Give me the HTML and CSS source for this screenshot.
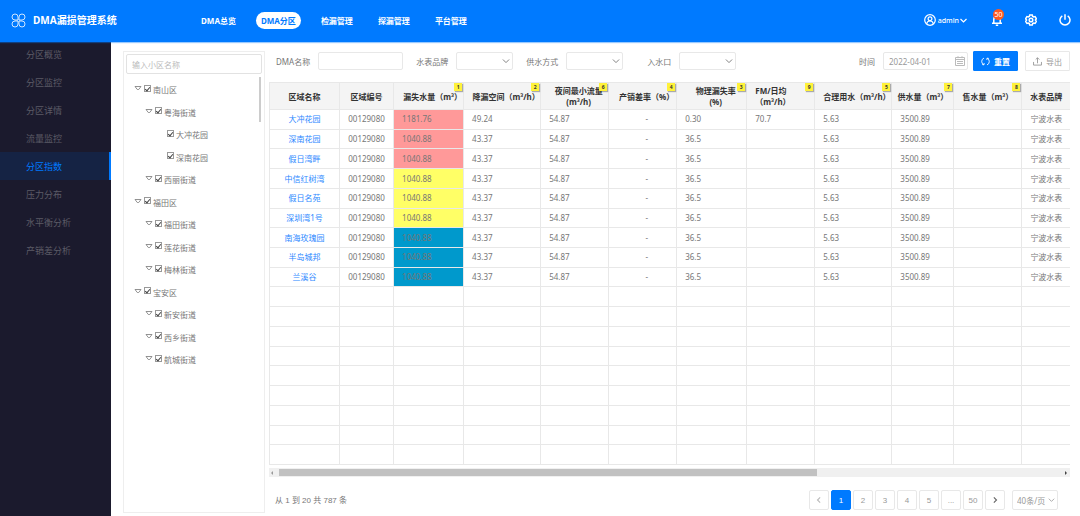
FILE: index.html
```html
<!DOCTYPE html>
<html lang="zh-CN">
<head>
  <meta charset="UTF-8" />
  <meta name="viewport" content="width=device-width, initial-scale=1.0"/>
  <title>DMA漏损管理系统</title>
  <link rel="stylesheet" href="styles.css">
</head>
<body>
  <header class="topbar">
    <svg class="logo" viewBox="0 0 15 15">
      <path d="M7 7H4A3 3 0 1 1 7 4zM8 7V4a3 3 0 1 1 3 3zM7 8v3a3 3 0 1 1-3-3zM8 8h3a3 3 0 1 1-3 3z"/>
    </svg>
    <h1>DMA漏损管理系统</h1>
    <nav class="main-nav">
      <a href="#">DMA总览</a>
      <a href="#" class="active">DMA分区</a>
      <a href="#">检漏管理</a>
      <a href="#">探漏管理</a>
      <a href="#">平台管理</a>
    </nav>
    <div class="tools">
      <button class="user" type="button">
        <svg class="icon" viewBox="0 0 12 12"><circle cx="6" cy="6" r="5.300"/><circle cx="6" cy="4.700" r="1.900"/><path d="M2.600 9.900c.4-2 1.700-2.900 3.400-2.900s3 .9 3.400 2.900"/></svg>
        <span>admin</span>
        <svg class="caret" viewBox="0 0 7 7"><path d="M.5 2l3 3 3-3"/></svg>
      </button>
      <button class="bell" type="button" aria-label="消息">
        <svg class="icon" viewBox="0 0 12 12"><path d="M1 9.300h10M2.800 9V5.500a3.200 3.200 0 0 1 6.400 0V9M4.800 11.300h2.400"/></svg>
        <span class="count">50</span>
      </button>
      <button class="gear" type="button" aria-label="设置">
        <svg class="icon" viewBox="0 0 12 12"><path d="M4.700 1h2.600l.4 1.400 1 .6 1.400-.4 1.300 2.200L10.400 6l1 1.200-1.300 2.200L8.700 9l-1 .6-.4 1.400H4.700l-.4-1.400-1-.6-1.400.4L.6 7.200l1-1.200-1-1.200 1.300-2.200 1.400.4 1-.6z"/><circle cx="6" cy="6" r="1.800"/></svg>
      </button>
      <button class="power" type="button" aria-label="退出">
        <svg class="icon" viewBox="0 0 12 12"><path d="M6 .3v5.500M3.300 1.800a5 5 0 1 0 5.400 0"/></svg>
      </button>
    </div>
  </header>

  <div class="layout">
    <nav class="sidebar">
      <a href="#">分区概览</a>
      <a href="#">分区监控</a>
      <a href="#">分区详情</a>
      <a href="#">流量监控</a>
      <a href="#" class="active">分区指数</a>
      <a href="#">压力分布</a>
      <a href="#">水平衡分析</a>
      <a href="#">产销差分析</a>
    </nav>

    <main class="content">
      <section class="tree-panel">
        <input type="text" class="search" placeholder="输入小区名称" aria-label="小区名称">
        <ul class="tree" id="tree"></ul>
        <span class="tree-scroll"></span>
      </section>

      <section class="data-panel">
        <form class="filters" onsubmit="event.preventDefault();">
          <label for="dmaName">DMA名称</label>
          <input type="text" id="dmaName">
          <label for="brand">水表品牌</label>
          <span class="select"><select id="brand"><option></option></select><svg viewBox="0 0 7 7"><path d="M.8 2.200l2.700 2.700 2.700-2.700"/></svg></span>
          <label for="supply">供水方式</label>
          <span class="select"><select id="supply"><option></option></select><svg viewBox="0 0 7 7"><path d="M.8 2.200l2.700 2.700 2.700-2.700"/></svg></span>
          <label for="inlet" class="inlet">入水口</label>
          <span class="select"><select id="inlet"><option></option></select><svg viewBox="0 0 7 7"><path d="M.8 2.200l2.700 2.700 2.700-2.700"/></svg></span>
          <label for="date" class="date-label">时间</label>
          <span class="date"><input type="text" id="date" value="2022-04-01"><svg viewBox="0 0 10 10"><path d="M.5 1.500h9v8h-9zM.5 3.500h9M3 .2v2M7 .2v2M2 5.500h6M2 7.500h6"/></svg></span>
          <button type="reset" class="btn primary"><svg viewBox="0 0 10 10"><path d="M3.300 1.200A4 4 0 0 0 3 8.500M1.300 8.400l2 .3.200-2M6.700 8.800A4 4 0 0 0 7 1.500M8.700 1.600l-2-.3-.2 2"/></svg>重置</button>
          <button type="button" class="btn"><svg viewBox="0 0 10 10"><path d="M5 7V1M3 2.800L5 .8l2 2M.6 5.500v3.500h8.800V5.500"/></svg>导出</button>
        </form>

        <table>
          <thead>
            <tr>
              <th class="plain">区域名称</th>
              <th class="plain">区域编号</th>
              <th>漏失水量（m³）<i class="tag">1</i></th>
              <th>降漏空间（m³/h）<i class="tag">2</i></th>
              <th>夜间最小流量<br>(m³/h)<i class="tag">6</i></th>
              <th>产销差率（%）<i class="tag">4</i></th>
              <th>物理漏失率<br>(%)<i class="tag">3</i></th>
              <th class="left">FM/日均<br>（m³/h）<i class="tag">9</i></th>
              <th class="left">合理用水（m³/h）<i class="tag">5</i></th>
              <th class="plain">供水量（m³）<i class="tag">7</i></th>
              <th class="plain">售水量（m³）<i class="tag">8</i></th>
              <th class="plain">水表品牌</th>
            </tr>
          </thead>
          <tbody id="rows"></tbody>
        </table>

        <div class="hscroll">
          <span class="arrow prev"></span>
          <span class="track"><span class="thumb"></span></span>
          <span class="arrow next"></span>
        </div>

        <footer class="pager">
          <p>从 1 到 20 共 787 条</p>
          <button type="button" disabled aria-label="上一页"><svg viewBox="0 0 7 7"><path d="M4.500 1.200L2.200 3.500l2.300 2.300"/></svg></button>
          <button type="button" class="current">1</button>
          <button type="button">2</button>
          <button type="button">3</button>
          <button type="button">4</button>
          <button type="button">5</button>
          <button type="button">...</button>
          <button type="button">50</button>
          <button type="button" class="following" aria-label="下一页"><svg viewBox="0 0 7 7"><path d="M2.500 1.200l2.300 2.300-2.300 2.300"/></svg></button>
          <span class="select page-size"><select aria-label="每页条数"><option>40条/页</option></select><svg viewBox="0 0 7 7"><path d="M.8 2.200l2.700 2.700 2.700-2.700"/></svg></span>
        </footer>
      </section>
    </main>
  </div>

  <script>
    // [level, name]
    const areas = [
      [1, "南山区"], [2, "粤海街道"], [3, "大冲花园"], [3, "深南花园"], [2, "西丽街道"],
      [1, "福田区"], [2, "福田街道"], [2, "莲花街道"], [2, "梅林街道"],
      [1, "宝安区"], [2, "新安街道"], [2, "西乡街道"], [2, "航城街道"]
    ];

    const arrow = '<svg viewBox="0 0 8 7"><path d="M1 1.500h6L4.700 4.500H3.300z"/></svg>';

    document.getElementById("tree").innerHTML = areas.map(([level, name]) => `
      <li class="level-${level}">
        ${level < 3 ? arrow : ""}
        <label><input type="checkbox" checked><span>${name}</span></label>
      </li>`).join("");

    // [name, loss level]
    const zones = [
      ["大冲花园", "red"], ["深南花园", "red"], ["假日湾畔", "red"],
      ["中信红树湾", "yellow"], ["假日名苑", "yellow"], ["深圳湾1号", "yellow"],
      ["南海玫瑰园", "blue"], ["半岛城邦", "blue"], ["兰溪谷", "blue"]
    ];

    let html = zones.map(([name, level], i) => `
      <tr>
        <td class="center"><a href="#">${name}</a></td>
        <td class="center">00129080</td>
        <td class="${level}">${i === 0 ? "1181.76" : "1040.88"}</td>
        <td>${i === 0 ? "49.24" : "43.37"}</td>
        <td>54.87</td>
        <td class="dash">-</td>
        <td>${i === 0 ? "0.30" : "36.5"}</td>
        <td>${i === 0 ? "70.7" : ""}</td>
        <td>5.63</td>
        <td>3500.89</td>
        <td></td>
        <td>宁波水表</td>
      </tr>`).join("");

    // blank rows fill the rest of the grid
    for (let i = 0; i < 9; i++) {
      html += "<tr>" + "<td></td>".repeat(12) + "</tr>";
    }
    document.getElementById("rows").innerHTML = html;
  </script>
</body>
</html>
```
FILE: styles.css
```css
* {
  box-sizing: border-box;
}

body {
  margin: 0;
  min-height: 100vh;
  display: flex;
  flex-direction: column;
  font-family: "Noto Sans", "Noto Sans CJK SC", sans-serif;
  font-size: 8px;
  line-height: 11px;
  color: #777;
  background: #fff;
}

a {
  text-decoration: none;
}

input, select, button {
  font: inherit;
  color: inherit;
  margin: 0;
}

svg {
  fill: none;
  stroke: currentColor;
  flex: none;
}

/* Top bar */
.topbar {
  position: relative;
  z-index: 1;
  display: flex;
  align-items: center;
  height: 42px;
  padding: 0 9px 2px 11px;
  background: #007aff;
  color: #fff;
  box-shadow: 0 1px 1px rgba(0, 122, 255, 0.4);
}

.logo {
  width: 15px;
  height: 15px;
  stroke-width: 0.8;
}

.topbar h1 {
  width: 163px;
  margin: 0 0 0 7px;
  font-size: 10px;
  line-height: 14px;
}

.main-nav {
  display: flex;
  gap: 15px;
}

.main-nav a {
  padding: 3px 5px;
  border-radius: 9px;
  color: #fff;
  font-weight: bold;
}

.main-nav .active {
  background: #fff;
  color: #007aff;
}

.tools {
  display: flex;
  align-items: center;
  margin-left: auto;
}

.tools button {
  position: relative;
  display: flex;
  align-items: center;
  padding: 0;
  border: 0;
  background: none;
}

.icon {
  width: 12px;
  height: 12px;
  stroke-width: 1.5;
}

.user .icon {
  stroke-width: 1.2;
}

.user span {
  margin: 0 1px 0 2px;
  font-size: 7px;
  font-weight: 500;
}

.caret {
  width: 7px;
  height: 7px;
  stroke-width: 1.2;
}

.bell {
  margin-left: 24px;
}

.gear, .power {
  margin-left: 22px;
}

.count {
  position: absolute;
  left: 2px;
  top: -5px;
  width: 11px;
  height: 11px;
  border-radius: 50%;
  background: #ff5a1f;
  font-size: 7px;
  text-align: center;
}

/* Side menu */
.layout {
  flex: 1;
  display: flex;
}

.sidebar {
  width: 111px;
  flex: none;
  margin-top: -2px;
  background: #1b1a2d;
}

.sidebar a {
  display: block;
  height: 28px;
  padding-left: 26px;
  font-size: 9px;
  line-height: 29px;
  color: #5c5b66;
}

.sidebar .active {
  border-right: 2px solid #007aff;
  background: #152344;
  color: #007aff;
}

.content {
  flex: 1;
  min-width: 0;
  display: flex;
  gap: 4px;
  padding: 9px 10px 3px 12px;
}

/* Area tree */
.tree-panel {
  position: relative;
  width: 142px;
  flex: none;
  padding: 2px;
  border: 1px solid #eee;
}

.search {
  display: block;
  width: 100%;
  height: 20px;
  padding: 0 5px;
  border: 1px solid #e2e2e2;
  border-radius: 2px;
}

.search::placeholder {
  color: #bbb;
}

.tree {
  margin: 4px 0 0;
  padding: 0;
  list-style: none;
}

.tree li {
  display: flex;
  align-items: center;
  height: 23px;
}

.tree li:nth-child(even) {
  height: 22px;
}

.tree svg {
  width: 8px;
  height: 7px;
  margin-bottom: 2px;
  stroke-width: 0.8;
}

.tree label {
  display: flex;
  align-items: center;
  gap: 2px;
  margin-left: 2px;
}

.tree .level-1 {
  padding-left: 8px;
}

.tree .level-2 {
  padding-left: 19px;
}

.tree .level-3 {
  padding-left: 39px;
}

.tree input {
  appearance: none;
  display: flex;
  align-items: center;
  justify-content: center;
  width: 7px;
  height: 7px;
  margin-bottom: 3px;
  border: 1px solid #999;
}

.tree input:checked::before {
  content: "";
  width: 2px;
  height: 4px;
  border: solid #444;
  border-width: 0 1px 1px 0;
  transform: rotate(40deg);
}

.tree-scroll {
  position: absolute;
  top: 25px;
  right: 3px;
  width: 2px;
  height: 45px;
  background: #ccc;
}

/* Filters */
.data-panel {
  flex: 1;
  min-width: 0;
  display: grid;
  grid-template-rows: auto 1fr auto auto;
}

.filters {
  display: flex;
  align-items: center;
  height: 20px;
  margin-bottom: 11px;
  padding-left: 7px;
}

.filters label {
  margin: 0 8px 0 13px;
}

.filters label:first-child {
  margin-left: 0;
}

.filters .inlet {
  margin-left: 24px;
}

.filters .date-label {
  margin-left: auto;
}

.filters input, .select select {
  appearance: none;
  height: 18px;
  padding: 0 5px;
  border: 1px solid #e8e8e8;
  border-radius: 2px;
  background: #fff;
}

.filters input {
  width: 85px;
}

.select, .date {
  position: relative;
  display: flex;
}

.select select {
  width: 57px;
}

.select svg, .date svg {
  position: absolute;
  right: 3px;
  top: 5px;
  width: 8px;
  height: 8px;
  stroke-width: 0.8;
  pointer-events: none;
}

.date input {
  color: #999;
}

.date svg {
  top: 4px;
  width: 10px;
  height: 10px;
  stroke-width: 1;
  color: #bbb;
}

.btn {
  display: flex;
  align-items: center;
  justify-content: center;
  gap: 4px;
  width: 45px;
  height: 20px;
  margin-left: 7px;
  padding: 0;
  border: 1px solid #e8e8e8;
  border-radius: 1px;
  background: #fff;
  color: #999;
}

.btn svg {
  width: 9px;
  height: 9px;
}

.btn.primary {
  margin-left: 5px;
  border-color: #007aff;
  background: #007aff;
  color: #fff;
  font-weight: bold;
}

/* Data table */
table {
  width: 100%;
  height: 100%;
  table-layout: fixed;
  border-collapse: collapse;
}

th, td {
  padding: 0 0 0 8px;
  border: 1px solid #e8e8e8;
  white-space: nowrap;
}

th:last-child, td:last-child {
  border-right: 0;
}

th {
  position: relative;
  height: 27px;
  background: #f4f4f4;
  color: #333;
}

td {
  height: 19px;
  padding-bottom: 1px;
}

th:nth-child(1), th:nth-child(3), th:nth-child(7) {
  width: 70px;
}

th:nth-child(2) {
  width: 54px;
}

th:nth-child(4), th:nth-child(9) {
  width: 77px;
}

th:nth-child(5), th:nth-child(6), th:nth-child(8), th:nth-child(11) {
  width: 68px;
}

th:nth-child(10) {
  width: 62px;
}

th:nth-child(12) {
  width: 48px;
}

.plain, .center {
  padding-left: 0;
  text-align: center;
}

.left {
  text-align: left;
}

.dash {
  text-align: center;
}

td a {
  color: #2b87ff;
}

.red {
  background: #ff9999;
}

.yellow {
  background: #ffff66;
}

.blue {
  background: #0099cc;
}

.tag {
  position: absolute;
  top: 0;
  right: 1px;
  width: 8px;
  height: 8px;
  background: #fff23a;
  box-shadow: 1px 1px 1px rgba(0, 0, 0, 0.3);
  font-size: 5px;
  font-style: normal;
  line-height: 8px;
  text-align: center;
}

/* Horizontal scrollbar */
.hscroll {
  display: flex;
  align-items: center;
  height: 9px;
  margin-top: 3px;
  background: #f0f0f0;
}

.track {
  flex: 1;
  margin: 0 6px;
}

.thumb {
  display: block;
  width: 69%;
  height: 7px;
  background: #c1c1c1;
}

.arrow {
  border: 2px solid transparent;
}

.prev {
  margin-left: 2px;
  border-left-width: 0;
  border-right-color: #999;
}

.next {
  margin-right: 3px;
  border-right-width: 0;
  border-left-color: #444;
}

/* Pagination */
.pager {
  display: flex;
  align-items: center;
  gap: 2px;
  margin: 13px 12px 3px 6px;
  font-family: "Liberation Sans", "Noto Sans CJK SC", sans-serif;
}

.pager p {
  margin: 0 auto 0 0;
}

.pager button {
  display: flex;
  align-items: center;
  justify-content: center;
  width: 20px;
  height: 20px;
  padding: 0;
  border: 1px solid #e8e8e8;
  border-radius: 2px;
  background: #fff;
  color: #999;
}

.pager button svg {
  width: 8px;
  height: 8px;
}

.pager button:disabled {
  color: #bbb;
}

.pager .following {
  color: #666;
}

.pager .current {
  border-color: #007aff;
  background: #007aff;
  color: #fff;
}

.page-size {
  margin-left: 5px;
  color: #999;
}

.page-size select {
  width: 46px;
  height: 20px;
  padding: 0 4px;
  font-family: "Noto Sans", "Noto Sans CJK SC", sans-serif;
}

.page-size svg {
  top: 6px;
  width: 7px;
}
```
